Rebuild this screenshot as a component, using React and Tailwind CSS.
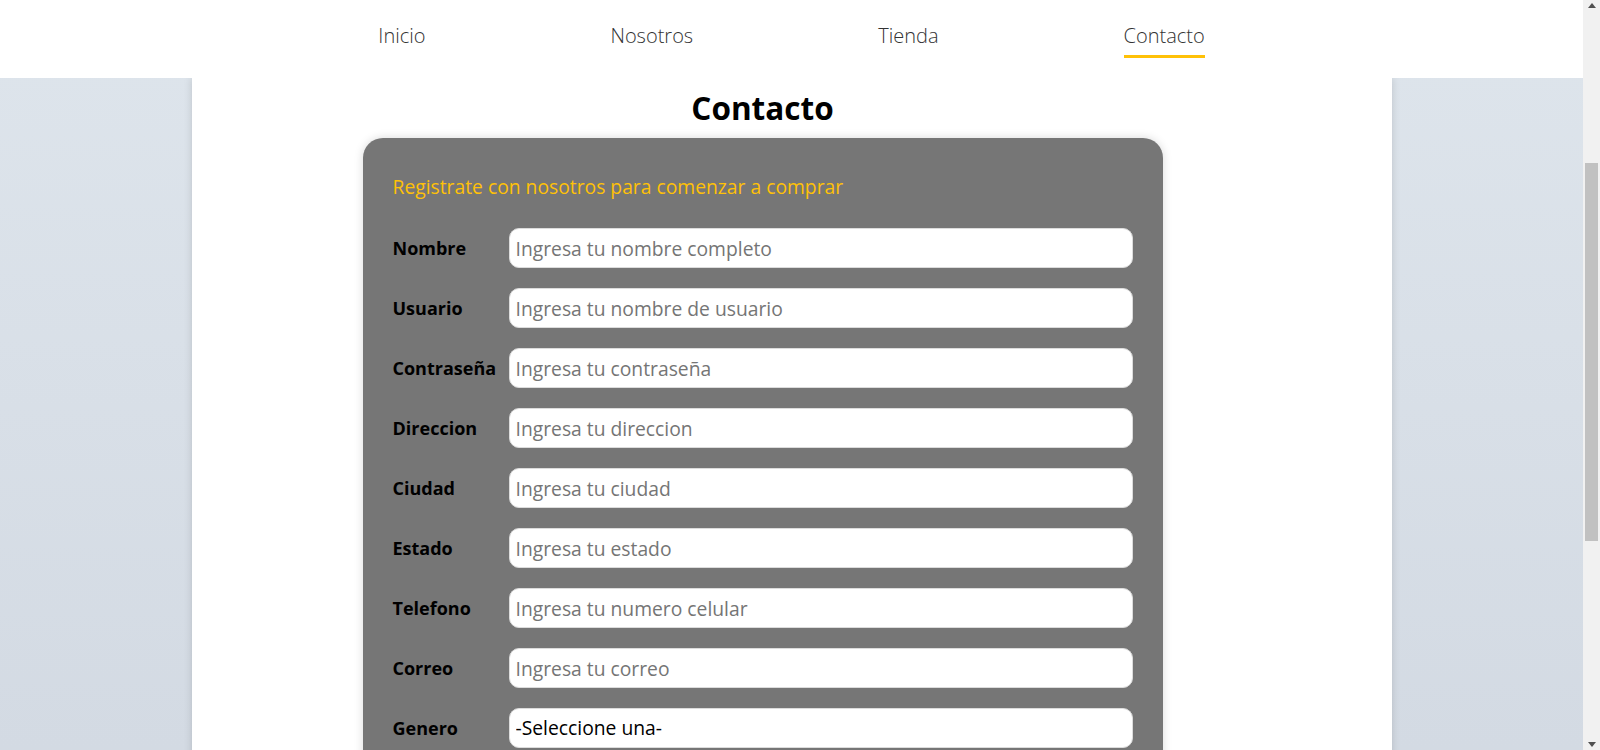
import React from "react";

const fields = [
  ["Nombre", "Ingresa tu nombre completo"],
  ["Usuario", "Ingresa tu nombre de usuario"],
  ["Contraseña", "Ingresa tu contraseña"],
  ["Direccion", "Ingresa tu direccion"],
  ["Ciudad", "Ingresa tu ciudad"],
  ["Estado", "Ingresa tu estado"],
  ["Telefono", "Ingresa tu numero celular"],
  ["Correo", "Ingresa tu correo"],
];

const nav = ["Inicio", "Nosotros", "Tienda", "Contacto"];

export default function App() {
  return (
    <div
      className="flex h-[750px] w-[1600px] overflow-hidden"
      style={{ fontFamily: '"Open Sans", "Noto Sans", sans-serif' }}
    >
      <div className="flex min-w-0 flex-1 flex-col overflow-hidden bg-gradient-to-b from-[#dee5ec] to-[#d3dae3]">
        <header className="relative z-10 flex h-[78px] shrink-0 justify-center gap-[185px] bg-white pt-[22px]">
          {nav.map((n) => (
            <div
              key={n}
              className={
                n === "Contacto"
                  ? "h-[36px] border-b-[3px] border-[#ffc107] text-[20px] font-light leading-[28px] text-[#333]"
                  : "h-[36px] text-[20px] font-light leading-[28px] text-[#333]"
              }
            >
              {n}
            </div>
          ))}
        </header>
        <main className="mx-auto w-[1200px] flex-1 bg-white shadow-[0_0_8px_rgba(0,0,0,0.15)]">
          <div className="ml-[171px] w-[800px]">
            <h1 className="mt-[10px] mb-[10px] text-center text-[31.5px] font-bold leading-[40px] text-black">
              Contacto
            </h1>
            <div className="rounded-[20px] bg-[#767676] px-[30px] pt-[35px] pb-[30px] shadow-[0_0_10px_rgba(0,0,0,0.15)]">
              <p className="mb-[27px] text-[19.3px] leading-[28px] text-[#ffc107]">
                Registrate con nosotros para comenzar a comprar
              </p>
              <div className="flex flex-col gap-5">
                {fields.map(([label, ph]) => (
                  <div key={label} className="flex h-[40px] items-center">
                    <label className="w-[116px] shrink-0 text-[18px] font-bold text-black">
                      {label}
                    </label>
                    <input
                      className="h-[40px] flex-1 rounded-[10px] border border-[#dcdcdc] bg-white pl-[6px] text-[19.3px] text-black outline-none placeholder:text-[#757575]"
                      placeholder={ph}
                    />
                  </div>
                ))}
                <div className="flex h-[40px] items-center">
                  <label className="w-[116px] shrink-0 text-[18px] font-bold text-black">
                    Genero
                  </label>
                  <select className="h-[40px] flex-1 appearance-none rounded-[10px] border border-[#dcdcdc] bg-white pl-[6px] text-[19.3px] text-black outline-none">
                    <option>-Seleccione una-</option>
                    <option>Masculino</option>
                    <option>Femenino</option>
                  </select>
                </div>
              </div>
            </div>
          </div>
        </main>
      </div>
      <div className="flex w-[17px] shrink-0 flex-col bg-[#f1f1f1]">
        <div className="flex h-[17px] justify-center pt-[3px]">
          <svg width="8" height="5" viewBox="0 0 8 5">
            <path d="M4 0 L8 5 L0 5 Z" fill="#505050" />
          </svg>
        </div>
        <div className="mx-[2px] mt-[146px] h-[378px] bg-[#c1c1c1]" />
        <div className="flex-1" />
        <div className="flex h-[17px] items-end justify-center pb-[3px]">
          <svg width="8" height="5" viewBox="0 0 8 5">
            <path d="M0 0 L8 0 L4 5 Z" fill="#505050" />
          </svg>
        </div>
      </div>
    </div>
  );
}
